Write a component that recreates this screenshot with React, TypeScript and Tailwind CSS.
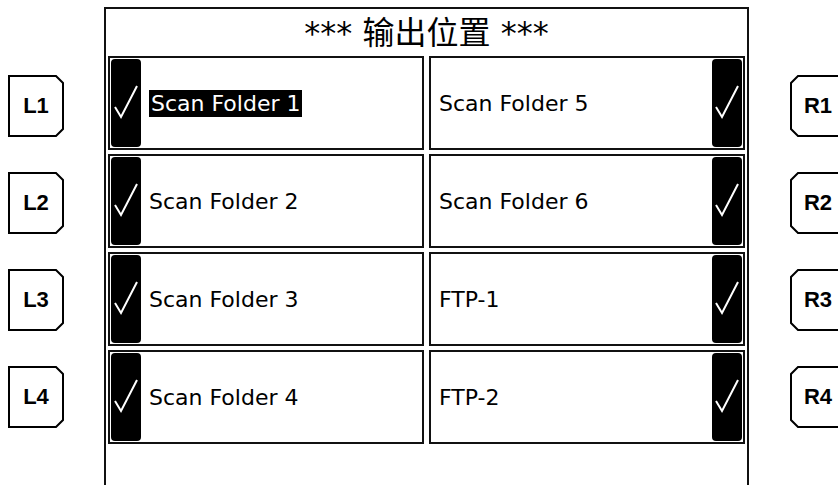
import React from "react";

interface Slot {
  label: string;
  selected?: boolean;
}

const leftSlots: Slot[] = [
  { label: "Scan Folder 1", selected: true },
  { label: "Scan Folder 2" },
  { label: "Scan Folder 3" },
  { label: "Scan Folder 4" },
];

const rightSlots: Slot[] = [
  { label: "Scan Folder 5" },
  { label: "Scan Folder 6" },
  { label: "FTP-1" },
  { label: "FTP-2" },
];

function SoftKey({ text, side }: { text: string; side: "left" | "right" }) {
  const points =
    side === "left"
      ? "1,1 48,1 55,8 55,54 48,61 1,61"
      : "8,1 55,1 55,61 8,61 1,54 1,8";
  return (
    <div className="relative w-[56px] h-[62px] flex items-center justify-center shrink-0">
      <svg className="absolute inset-0" width="56" height="62" viewBox="0 0 56 62">
        <polygon points={points} fill="white" stroke="black" strokeWidth="2" />
      </svg>
      <span className="relative font-['Liberation_Sans',sans-serif] font-bold text-[22px] leading-none text-black">
        {text}
      </span>
    </div>
  );
}

function Check() {
  return (
    <div className="w-[30px] h-full bg-black rounded-[4px] shrink-0 flex items-center justify-center">
      <svg width="30" height="86" viewBox="0 0 30 86">
        <polyline
          points="4,47 10,57 26,26"
          fill="none"
          stroke="white"
          strokeWidth="2"
        />
      </svg>
    </div>
  );
}

function Cell({ slot, side }: { slot: Slot; side: "left" | "right" }) {
  return (
    <div className="h-[94px] border-2 border-[#111] p-[1px] flex items-stretch">
      {side === "left" && <Check />}
      <div
        className={
          side === "left"
            ? "flex-1 flex items-center pl-[8px]"
            : "flex-1 flex items-center pl-[7px]"
        }
      >
        <span
          className={
            slot.selected
              ? "bg-black text-white px-[2px] leading-[27px] text-[22px] font-['DejaVu_Sans',sans-serif]"
              : "text-black leading-[27px] text-[22px] font-['DejaVu_Sans',sans-serif]"
          }
        >
          {slot.label}
        </span>
      </div>
      {side === "right" && <Check />}
    </div>
  );
}

export default function App() {
  return (
    <div className="w-[838px] h-[485px] overflow-hidden bg-white flex">
      {/* left soft keys */}
      <div className="w-[104px] shrink-0 pl-[8px] pt-[75px] flex flex-col gap-[35px]">
        {["L1", "L2", "L3", "L4"].map((t) => (
          <SoftKey key={t} text={t} side="left" />
        ))}
      </div>

      {/* main panel */}
      <div className="w-[645px] h-[500px] mt-[7px] shrink-0 border-2 border-b-0 border-[#111]">
        <div className="h-[47px] flex items-center justify-center font-['DejaVu_Sans','Noto_Sans_CJK_SC',sans-serif] text-[32px] leading-none text-black">
          *** 输出位置 ***
        </div>
        <div className="px-[2px] grid grid-cols-2 gap-x-[5px] gap-y-[4px]">
          {leftSlots.map((s, i) => (
            <React.Fragment key={i}>
              <Cell slot={s} side="left" />
              <Cell slot={rightSlots[i]} side="right" />
            </React.Fragment>
          ))}
        </div>
      </div>

      {/* right soft keys */}
      <div className="ml-[41px] shrink-0 pt-[75px] flex flex-col gap-[35px]">
        {["R1", "R2", "R3", "R4"].map((t) => (
          <SoftKey key={t} text={t} side="right" />
        ))}
      </div>
    </div>
  );
}
